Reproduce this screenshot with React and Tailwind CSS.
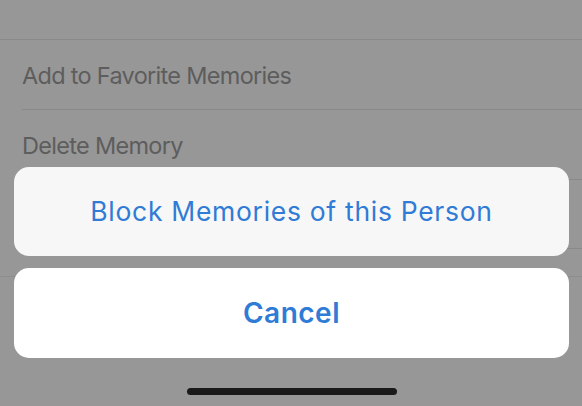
import React from "react";

const ListRow = ({ label }) => {
    return (
        <div className="pl-[22px]">
            <div className="h-[70px] flex items-center border-b border-[#898989]">
                <span className="text-[23.5px] text-[#5d5d5d] tracking-[-0.7px] pt-[2px]">{label}</span>
            </div>
        </div>
    )
}

const App = () => {
    return (
        <div className="relative w-[582px] h-[406px] overflow-hidden bg-[#979797]" style={{ fontFamily: "Inter, 'Noto Sans', sans-serif" }}>
            {/* dimmed list behind the sheet */}
            <div className="h-[40px] border-b border-[#898989]"></div>
            <ListRow label="Add to Favorite Memories" />
            <ListRow label="Delete Memory" />
            <div className="pl-[22px]">
                <div className="h-[69px] border-b border-[#898989]"></div>
            </div>
            <div className="h-[28px] border-b border-[#8d8d8d]"></div>

            {/* action sheet */}
            <div className="absolute left-[14px] right-[13px] top-[167px] flex flex-col gap-[12px]">
                <button className="h-[89px] w-full rounded-[15px] bg-[#f7f7f7] flex items-center justify-center">
                    <span className="text-[26.5px] text-[#2f7bd6] tracking-[0.7px]">Block Memories of this Person</span>
                </button>
                <button className="h-[90px] w-full rounded-[15px] bg-white flex items-center justify-center">
                    <span className="text-[28px] font-semibold text-[#2f7bd6] tracking-[0.5px]">Cancel</span>
                </button>
            </div>

            {/* home indicator */}
            <div className="absolute left-[187px] top-[388px] w-[210px] h-[7px] rounded-full bg-[#1a1a1a]"></div>
        </div>
    )
}

export default App;
